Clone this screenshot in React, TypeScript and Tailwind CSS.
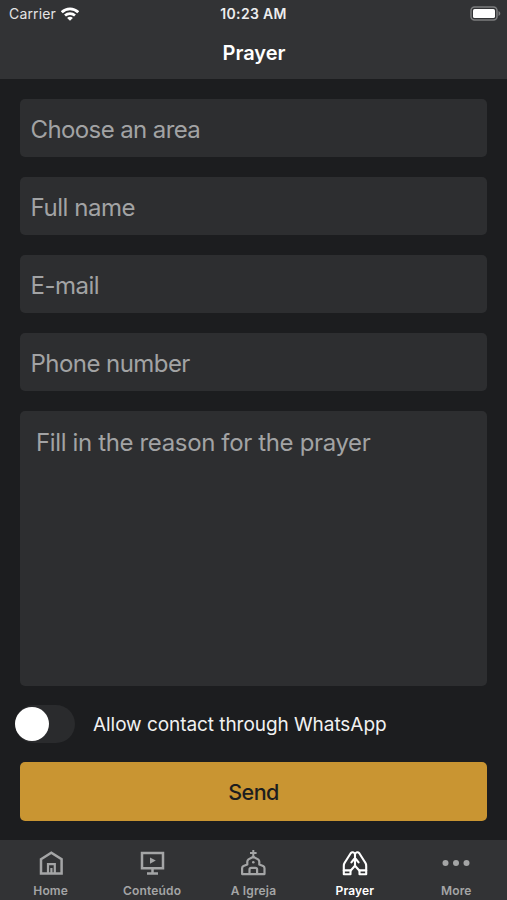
import { useState } from "react";
import type { ReactNode } from "react";

interface IField {
    label: string;
    spacing: string;
}

interface ITab {
    label: string;
    icon: ReactNode;
}

const fields: IField[] = [
    { label: "Choose an area", spacing: "tracking-[-0.6px]" },
    { label: "Full name", spacing: "tracking-[-0.45px]" },
    { label: "E-mail", spacing: "tracking-[-0.5px]" },
    { label: "Phone number", spacing: "tracking-[-0.55px]" },
];

const WifiIcon = () => (
    <svg width="18" height="14" viewBox="0 0 18 14" fill="none" stroke="white" strokeWidth="2.7">
        <path d="M.8 5.2C5.4.7 12.6.7 17.2 5.2" />
        <path d="M4 8.6c2.8-2.6 7.2-2.6 10 0" />
        <path d="M9 13.8 6.1 10.9c1.7-1.5 4.1-1.5 5.8 0z" fill="white" stroke="none" />
    </svg>
);

const BatteryIcon = () => (
    <svg width="31" height="15" viewBox="0 0 31 15" fill="none">
        <rect x="1" y="1" width="26" height="13" rx="3.5" stroke="#7c7d7e" strokeWidth="1.5" />
        <rect x="3" y="3" width="22" height="9" rx="1.6" fill="white" />
        <path d="M28.5 5v5c1-.4 1.8-1.4 1.8-2.5S29.5 5.4 28.5 5z" fill="#7c7d7e" />
    </svg>
);

const HomeIcon = () => (
    <svg width="28" height="28" viewBox="0 0 28 28" fill="none" stroke="currentColor" strokeWidth="2.5">
        <path d="M4 10.3 14.3 3.8l10.3 6.5v14.2H4z" />
        <path d="M11 24.5v-9.300h6.800v9.300M14.400 19v5.500" strokeWidth="2.2" />
    </svg>
);

const ContentIcon = () => (
    <svg width="28" height="28" viewBox="0 0 28 28" fill="none" stroke="currentColor" strokeWidth="2.5">
        <path d="M4 4h21v15.2H4zM14.5 19v5.500M9 24.500h11" />
        <path d="M12 8.400v6.400l5.800-3.200z" fill="currentColor" stroke="none" />
    </svg>
);

const ChurchIcon = () => (
    <svg width="28" height="28" viewBox="0 0 28 28" fill="none" stroke="currentColor" strokeWidth="2.2" strokeLinejoin="round">
        <path d="M14.300 1v8M11 3.900h6.600" strokeWidth="2" />
        <path d="M8.300 15.500v-2.700c0-1 .4-1.800 1.200-2.400l4.800-2.600 4.800 2.600c.8.600 1.200 1.400 1.200 2.400v2.700l3.800 1.500c1 .5 1.400 1.200 1.400 2.200v5.900H3.100v-5.900c0-1 .4-1.700 1.400-2.200z" />
        <path d="M10.500 24.800v-4.200c0-1 .7-1.700 1.700-1.700h4.200c1 0 1.700.7 1.700 1.700v4.200" />
        <circle cx="14.300" cy="13.300" r="1.300" fill="currentColor" stroke="none" />
    </svg>
);

const PrayerIcon = () => (
    <svg width="28" height="28" viewBox="0 0 28 28" fill="none" stroke="currentColor" strokeWidth="2.1" strokeLinejoin="round" strokeLinecap="round">
        <path d="M14 5c-1.200-2-2.900-2.300-4.300-.8L4 13.200c-.8 1.200-1.200 2.300-1.200 3.800v8.200h6.700v-3.400L14 16.800" />
        <path d="M14 5c1.200-2 2.900-2.300 4.300-.8l5.700 9c.8 1.200 1.200 2.300 1.200 3.800v8.200h-6.700v-3.400L14 16.800" />
        <path d="M2.800 21.400h7M18.200 21.400h7M14 5v11.800M10.400 13.400 14 9l3.600 4.400" />
    </svg>
);

const MoreIcon = () => (
    <svg width="28" height="28" viewBox="0 0 28 28" fill="currentColor">
        <circle cx="3.500" cy="14" r="3" />
        <circle cx="14" cy="14" r="3" />
        <circle cx="24.500" cy="14" r="3" />
    </svg>
);

const tabs: ITab[] = [
    { label: "Home", icon: <HomeIcon /> },
    { label: "Conteúdo", icon: <ContentIcon /> },
    { label: "A Igreja", icon: <ChurchIcon /> },
    { label: "Prayer", icon: <PrayerIcon /> },
    { label: "More", icon: <MoreIcon /> },
];

const App = () => {
    const [allowContact, setAllowContact] = useState(false);
    const [activeTab, setActiveTab] = useState("Prayer");

    return (
        <div className="flex h-[900px] w-full flex-col bg-[#1c1d1f] font-['Inter',sans-serif] text-white">
            <header className="h-[79px] bg-[#323335]">
                <div className="grid h-[27px] grid-cols-3 items-center px-[6px] text-[14px]">
                    <div className="flex items-center gap-[5px] pl-[3px] text-[#e4e4e5]">
                        <span className="tracking-[0.15px]">Carrier</span>
                        <WifiIcon />
                    </div>
                    <span className="text-center font-semibold tracking-[0.3px] text-[#ededee]">10:23 AM</span>
                    <div className="flex justify-end">
                        <BatteryIcon />
                    </div>
                </div>
                <h1 className="mt-[11px] pl-px text-center text-[20px] font-semibold leading-[30px]">Prayer</h1>
            </header>

            <main className="flex flex-1 flex-col px-5 pt-[20px]">
                <div className="flex flex-col gap-[20px] text-[24px] text-[#a2a3a4]">
                    {fields.map((field) => (
                        <div className="flex h-[58px] items-center rounded-[5px] bg-[#2d2e30] px-[10.5px] pt-[3px]" key={field.label}>
                            <span className={field.spacing}>{field.label}</span>
                        </div>
                    ))}
                    <div className="h-[275px] rounded-[5px] bg-[#2d2e30] px-4 pt-[14px]">
                        <span className="whitespace-nowrap tracking-[-0.36px]">Fill in the reason for the prayer</span>
                    </div>
                </div>

                <div className="-ml-[5px] mt-[19px] flex items-center">
                    <button
                        className={allowContact ? "flex h-[38px] w-[60px] items-center justify-end rounded-full bg-[#c99531]" : "flex h-[38px] w-[60px] items-center rounded-full bg-[#2a2b2d]"}
                        onClick={() => setAllowContact(!allowContact)}
                    >
                        <span className="h-[34px] w-[34px] rounded-full bg-white" />
                    </button>
                    <span className="ml-[18px] whitespace-nowrap pt-[3px] text-[19px] tracking-[-0.06px] text-[#f1f1f1]">Allow contact through WhatsApp</span>
                </div>

                <button className="mt-[19px] h-[59px] rounded-[5px] bg-[#c99532] pt-[2px] text-[21.5px] font-medium tracking-[-0.6px] text-[#1c1d1f]">Send</button>
            </main>

            <nav className="grid h-[60px] grid-cols-5 bg-[#323335]">
                {tabs.map((tab) => (
                    <button
                        className={tab.label === activeTab ? "flex flex-col items-center pt-[9px] text-white" : "flex flex-col items-center pt-[9px] text-[#a4a5a6]"}
                        key={tab.label}
                        onClick={() => setActiveTab(tab.label)}
                    >
                        {tab.icon}
                        <span className="mt-[6px] text-[12px] font-semibold leading-[16px] tracking-[0.15px]">{tab.label}</span>
                    </button>
                ))}
            </nav>
        </div>
    );
};

export default App;
